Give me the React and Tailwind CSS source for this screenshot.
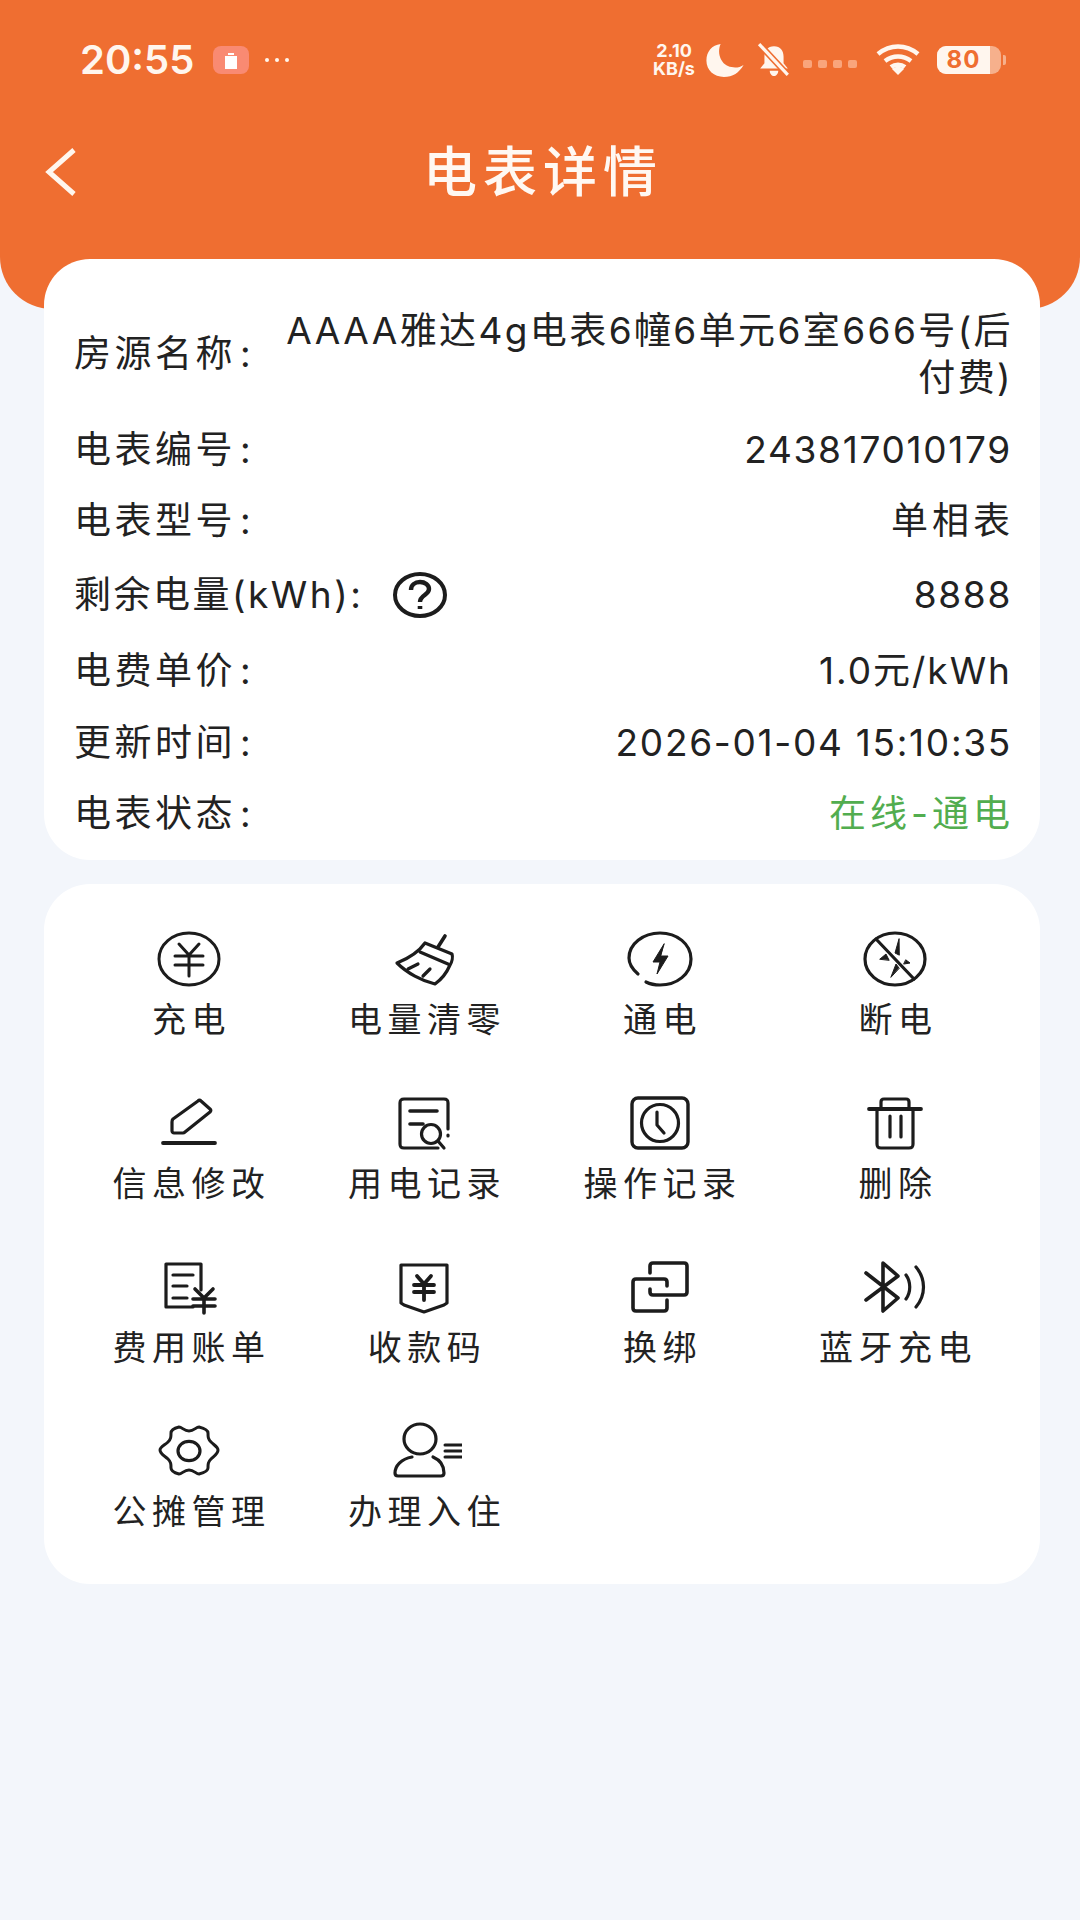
const FONT = "font-['Inter','Noto_Sans_CJK_SC',sans-serif]";

const Svg = ({ children, w = 64, h = 64, className = "" }) => (
  <svg width={w} height={h} viewBox="0 0 64 64" fill="none" stroke="#1c1c1c" strokeWidth="3.2" strokeLinecap="round" strokeLinejoin="round" className={className}>
    {children}
  </svg>
);

const icons = {
  yuan: (
    <Svg w={68}>
      <ellipse cx="32" cy="32" rx="30" ry="26" strokeWidth="3" />
      <path d="M22 17l10 11 10-11M18 29h28M18 38h28M32 28v21" strokeWidth="3" />
    </Svg>
  ),
  broom: (
    <Svg>
      <path d="M53 9l-7 11" strokeWidth="3.6" />
      <path d="M33 16l27 11c1 3 0 8-2 11-3 7-8 14-15 19C30 54 15 46 5 36c10-4 21-10 28-20z" />
      <path d="M28 25l28 12M26 37l-10 5M38 42l-7 7" />
    </Svg>
  ),
  power: (
    <Svg w={68}>
      <path d="M10 47C3 41 1 36 1 31 1 17 15 6 32 6s31 11 31 26-14 26-31 26c-5 0-10-1-14-3" />
      <path d="M36 17L25 35h7l-3 12 11-18h-7z" fill="#1c1c1c" strokeWidth="1" />
    </Svg>
  ),
  cut: (
    <Svg w={66}>
      <ellipse cx="32" cy="32" rx="30" ry="26" />
      <path d="M13 12l38 40" />
      <path d="M36 12l-4 14 4 2zM17 32l6-5 3 6zM28 50l5-13 3 4zM43 33l4 3-6 1z" fill="#1c1c1c" strokeWidth="1" />
    </Svg>
  ),
  edit: (
    <Svg>
      <path d="M41 10c1-1 2-1 3 0l9 8c1 1 1 2 0 3L28 41c-1 1-1 1-2 1H17c-1 0-2-1-2-2v-9c0-1 0-2 1-3z" />
      <path d="M6 52h52" strokeWidth="3.8" />
    </Svg>
  ),
  recordSearch: (
    <Svg>
      <path d="M46 57H12c-3 0-4-1-4-4V12c0-3 1-4 4-4h40c3 0 4 1 4 4v26" />
      <path d="M18 20h27M18 33h13" strokeWidth="3.6" />
      <circle cx="39" cy="43" r="9.5" />
      <path d="M46 50l6 7M56 44v1" />
    </Svg>
  ),
  clock: (
    <Svg>
      <rect x="4" y="7" width="56" height="50" rx="6" strokeWidth="3.4" />
      <circle cx="32" cy="32" r="18.5" />
      <path d="M29 21v13l7 8" />
    </Svg>
  ),
  trash: (
    <Svg>
      <path d="M6 18h52" strokeWidth="3.8" />
      <path d="M18 18v-7c0-2 1-3 3-3h22c2 0 3 1 3 3v7M14 18v35c0 3 1 4 4 4h28c3 0 4-1 4-4V18M27 25v21M38 25v21" />
    </Svg>
  ),
  bill: (
    <Svg>
      <path d="M36 52H9V9h35v26" />
      <path d="M16 20h20M16 31h14M16 43h14" />
      <path d="M38 34l9 9 9-9M36 44h22M36 51h22M47 43v15" strokeWidth="3.6" />
    </Svg>
  ),
  qrcode: (
    <Svg>
      <path d="M9 10h46v38l-3 2-20 7-20-7-3-2z" />
      <path d="M25 21l7 8 7-8M22 30h20M22 37h20M32 29v16" strokeWidth="3.8" />
    </Svg>
  ),
  swap: (
    <Svg>
      <path d="M22 18v-7c0-2 1-3 3-3h31c2 0 3 1 3 3v26c0 2-1 3-3 3H25c-2 0-3-1-3-3v-3" strokeWidth="3.6" />
      <path d="M39 31v-4c0-2-1-3-3-3H8c-2 0-3 1-3 3v26c0 2 1 3 3 3h28c2 0 3-1 3-3v-8" strokeWidth="3.6" />
    </Svg>
  ),
  bt: (
    <Svg>
      <path d="M3 18l32 25-15 13V8l15 13L3 45" strokeWidth="3.6" />
      <path d="M43 20c5 7 5 17 0 24M53 12c10 12 10 28 0 40" />
    </Svg>
  ),
  gear: (
    <Svg>
      <path d="M22 8c3 0 5 4 10 4s7-4 10-4c4 1 9 3 9 6 0 4 0 6 3 9s7 5 7 8c0 4-4 6-7 9s-3 5-3 9c0 3-5 5-9 6-3 0-5-4-10-4s-7 4-10 4c-4-1-8-3-8-6 0-4 0-6-3-9s-8-5-8-9c0-3 5-5 8-8s3-5 3-9c0-3 4-5 8-6z" strokeWidth="3" />
      <ellipse cx="32" cy="32" rx="11" ry="9.7" strokeWidth="3.2" />
    </Svg>
  ),
  user: (
    <Svg w={76} h={64}>
      <ellipse cx="28" cy="20" rx="16" ry="15" />
      <path d="M20 38C9 40 3 47 3 54c0 2 1 3 3 3h43c2 0 3-1 3-3 0-7-4-13-11-16" />
      <path d="M53 26h20M53 32h20M53 38h20" strokeWidth="3" />
    </Svg>
  ),
};

const actions = [
  ["yuan", "充电"], ["broom", "电量清零"], ["power", "通电"], ["cut", "断电"],
  ["edit", "信息修改"], ["recordSearch", "用电记录"], ["clock", "操作记录"], ["trash", "删除"],
  ["bill", "费用账单"], ["qrcode", "收款码"], ["swap", "换绑"], ["bt", "蓝牙充电"],
  ["gear", "公摊管理"], ["user", "办理入住"],
];

const Label = ({ children }) => (
  <>
    <span>{children}</span>
    <span className="ml-[4px]">:</span>
  </>
);

function Row({ label, children, className = "h-[71px]", valueClass = "text-[#222] tracking-[1.7px] -mr-[2px]" }) {
  return (
    <div className={`flex items-center justify-between ${className}`}>
      <div className="flex items-center shrink-0 tracking-[3.5px]">{label}</div>
      <div className={`text-right ${valueClass}`}>{children}</div>
    </div>
  );
}

function StatusBar() {
  return (
    <div className="h-[120px] flex items-center justify-between pl-[80px] pr-[74px] text-[#fff6ee]">
      <div className="flex items-center">
        <span className="text-[40px] leading-none font-semibold">20:55</span>
        <span className="ml-[19px] w-[36px] h-[28px] rounded-[8px] bg-[#f98a72] flex items-center justify-center">
          <svg width="16" height="18" viewBox="0 0 16 18" fill="#fff"><path d="M2 5h12v13H2zM5 2h6v2H5z" /></svg>
        </span>
        <span className="ml-[16px] flex gap-[6px]">
          <i className="w-[4px] h-[4px] rounded-full bg-[#fff6ee]" />
          <i className="w-[4px] h-[4px] rounded-full bg-[#fff6ee]" />
          <i className="w-[4px] h-[4px] rounded-full bg-[#fff6ee]" />
        </span>
      </div>
      <div className="flex items-center">
        <div className="flex flex-col items-center text-[18px] leading-[18px] font-bold mr-[8px] w-[46px]">
          <span>2.10</span>
          <span>KB/s</span>
        </div>
        <svg width="40" height="35" viewBox="0 0 36 32" fill="#fff6ee" className="mr-[10px]">
          <path d="M14 1C6 2 1 8 1 16c0 9 7 15 16 15 8 0 14-4 18-11-3 2-7 3-11 2C15 21 10 10 14 1z" />
        </svg>
        <svg width="38" height="34" viewBox="0 0 34 32" fill="#fff6ee" className="mr-[10px]">
          <path d="M17 3c6 0 9 4 9 10v6l4 5H4l4-5v-6c0-6 3-10 9-10zM13 26h8c0 3-2 5-4 5s-4-2-4-5z" />
          <path d="M4 2l26 28" stroke="#ef6e31" strokeWidth="6" />
          <path d="M3 1l27 29" stroke="#fff6ee" strokeWidth="3" />
        </svg>
        <div className="flex gap-[6px] mr-[19px] mt-[8px]">
          <i className="w-[9px] h-[8px] rounded-[2px] bg-[#f9a57c]" />
          <i className="w-[9px] h-[8px] rounded-[2px] bg-[#f9a57c]" />
          <i className="w-[9px] h-[8px] rounded-[2px] bg-[#f9a57c]" />
          <i className="w-[9px] h-[8px] rounded-[2px] bg-[#f9a57c]" />
        </div>
        <svg width="44" height="32" viewBox="0 0 44 32" fill="none" stroke="#fff6ee" strokeWidth="4.5" className="mr-[17px]">
          <path d="M2 10c12-10 28-10 40 0M9 17c8-6 18-6 26 0M15 23c4-3 10-3 14 0" />
          <path d="M22 31l-6-6c3-3 9-3 12 0z" fill="#fff6ee" stroke="none" />
        </svg>
        <div className="flex items-center">
          <div className="w-[64px] h-[28px] rounded-[9px] bg-[#f6b08c] overflow-hidden">
            <div className="w-[53px] h-full bg-[#fff6ee] flex items-center justify-center text-[#ef6e31] text-[24px] font-bold leading-none tracking-[1px]">80</div>
          </div>
          <i className="ml-[2px] w-[3px] h-[10px] rounded-r-[2px] bg-[#f6b08c]" />
        </div>
      </div>
    </div>
  );
}

export default function App() {
  return (
    <div className={`w-[1080px] h-[1920px] overflow-hidden bg-[#f3f6fb] ${FONT}`}>
      <header className="h-[309px] bg-[#ef6e31] rounded-b-[52px]">
        <StatusBar />
        <div className="relative h-[100px] mt-[3px] flex items-center justify-center">
          <svg width="36" height="50" viewBox="0 0 36 50" fill="none" stroke="#fff6ee" strokeWidth="5" className="absolute left-[43px] top-[24px]">
            <path d="M31 3L6 25l25 22" />
          </svg>
          <h1 className="text-[54px] leading-none font-medium tracking-[6px] text-[#fff8f2] ml-[6px]">电表详情</h1>
        </div>
      </header>

      <main className="-mt-[50px] pl-[44px] pr-[40px] flex flex-col gap-[24px] text-[#222] text-[37px]">
        <section className="relative bg-white rounded-[46px] pl-[30px] pr-[30px] pt-[35px] h-[601px]">
          <Row label={<Label>房源名称</Label>} className="h-[120px]" valueClass="text-[#222] tracking-[2.4px] -mr-[3px]">
            <div className="leading-[47px] whitespace-nowrap">AAAA雅达4g电表6幢6单元6室666号(后<br />付费)</div>
          </Row>
          <Row label={<Label>电表编号</Label>} className="h-[72px]">243817010179</Row>
          <Row label={<Label>电表型号</Label>} className="h-[70px]" valueClass="text-[#222] tracking-[4px] -mr-[4px]">单相表</Row>
          <Row
            label={
              <>
                <span className="tracking-[2.5px]">剩余电量(kWh):</span>
                <svg width="56" height="46" viewBox="0 0 54 46" fill="none" stroke="#1c1c1c" className="ml-[29px]">
                  <ellipse cx="27" cy="23" rx="25" ry="21" strokeWidth="4" />
                  <path d="M18 18c0-5 4-8 9-8s9 3 9 7c0 6-9 6-9 13" strokeWidth="4.4" />
                  <path d="M27 34v3" strokeWidth="4.6" />
                </svg>
              </>
            }
            className="h-[78px]"
          >
            8888
          </Row>
          <Row label={<Label>电费单价</Label>} className="h-[73px]" valueClass="text-[#222] tracking-[2px] -mr-[2px]">1.0元/kWh</Row>
          <Row label={<Label>更新时间</Label>} className="h-[71px]">2026-01-04 15:10:35</Row>
          <Row label={<Label>电表状态</Label>} className="h-[71px]" valueClass="text-[#52ad4f] tracking-[4px] -mr-[4px]">在线-通电</Row>
        </section>

        <section className="bg-white rounded-[46px] h-[700px] px-[27px] pt-[43px]">
          <div className="grid grid-cols-4 auto-rows-[164px]">
            {actions.map(([icon, label]) => (
              <div key={label} className="flex flex-col items-center">
                <div className="h-[64px] flex items-center justify-center">{icons[icon]}</div>
                <span className="mt-[7px] leading-[44px] text-[34px] tracking-[5.5px] mr-[-5.5px] whitespace-nowrap">{label}</span>
              </div>
            ))}
          </div>
        </section>
      </main>
    </div>
  );
}
